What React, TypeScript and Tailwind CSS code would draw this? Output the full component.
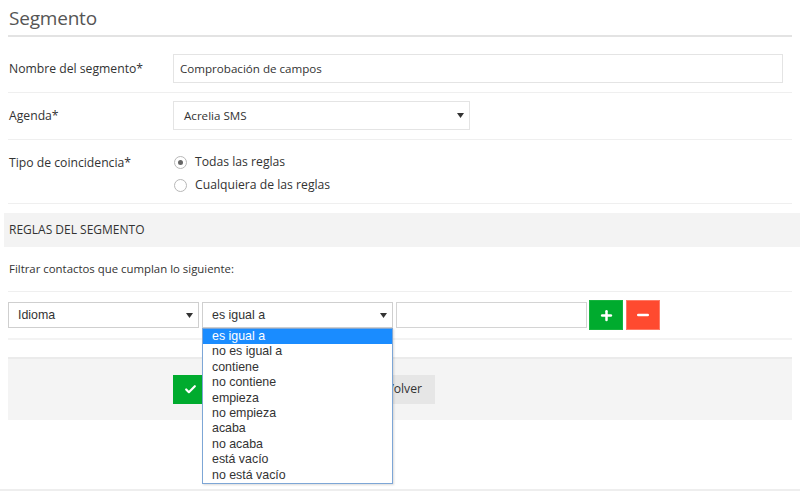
import { Check, Plus, Minus } from "lucide-react";

const ops = [
  "es igual a",
  "no es igual a",
  "contiene",
  "no contiene",
  "empieza",
  "no empieza",
  "acaba",
  "no acaba",
  "está vacío",
  "no está vacío",
];

const Caret = () => (
  <svg width="7" height="5" viewBox="0 0 7 5" className="shrink-0">
    <path d="M0 0h7L3.5 5z" fill="#333" />
  </svg>
);

const Radio = ({ checked }: { checked?: boolean }) => (
  <span className="w-[13px] h-[13px] rounded-full border border-[#b8b8b8] bg-white flex items-center justify-center shrink-0">
    {checked && <span className="w-[5px] h-[5px] rounded-full bg-[#666]" />}
  </span>
);

export default function App() {
  return (
    <div className="w-[800px] h-[491px] bg-white relative overflow-hidden font-['Open_Sans',sans-serif] text-[12.2px] text-[#333]">
      <div className="px-2">
        <h1 className="pl-px pt-[5px] h-[35px] text-[19px] text-[#555] leading-[26px] tracking-[-0.2px]">Segmento</h1>
        <div className="h-[2px] bg-[#e3e3e3]" />

        <div className="flex items-start pt-[17px] pb-[9px] border-b border-[#efefef]">
          <label className="w-[165px] pl-px leading-[29px]">Nombre del segmento*</label>
          <div className="w-[610px] h-[29px] border border-[#e4e4e4] flex items-center px-[6px] text-[11.6px]">
            Comprobación de campos
          </div>
        </div>

        <div className="flex items-start pt-[8px] pb-[9px] border-b border-[#efefef]">
          <label className="w-[165px] pl-px leading-[29px]">Agenda*</label>
          <div className="w-[297px] h-[29px] border border-[#e4e4e4] flex items-center justify-between pl-[10px] pr-[5px] text-[11.6px]">
            <span>Acrelia SMS</span>
            <Caret />
          </div>
        </div>

        <div className="flex items-start pt-[11px] pb-[6px] border-b border-[#efefef]">
          <label className="w-[165px] pl-px leading-[23px]">Tipo de coincidencia*</label>
          <div className="flex flex-col">
            <div className="flex items-center gap-[8px] h-[23px] pl-[1px]">
              <Radio checked />
              <span>Todas las reglas</span>
            </div>
            <div className="flex items-center gap-[8px] h-[23px] pl-[1px]">
              <Radio />
              <span>Cualquiera de las reglas</span>
            </div>
          </div>
        </div>
      </div>

      <div className="mt-[9px] ml-[4px] h-[34px] bg-[#f3f3f3] flex items-center pl-[5px] text-[12px]">
        REGLAS DEL SEGMENTO
      </div>

      <div className="px-2">
        <div className="h-[45px] flex items-center pl-px text-[11.4px] border-b border-[#efefef]">
          Filtrar contactos que cumplan lo siguiente:
        </div>

        <div className="flex items-start pt-[10px] h-[48px] border-b-[2px] border-[#f3f3f3] font-['Liberation_Sans',Arial,sans-serif] text-[12.4px]">
          <div className="w-[191px] h-[26px] border border-[#cfcfcf] flex items-center justify-between pl-[9px] pr-[5px]">
            <span>Idioma</span>
            <Caret />
          </div>
          <div className="ml-[3px] w-[191px] h-[26px] border border-[#cfcfcf] flex items-center justify-between pl-[9px] pr-[5px]">
            <span>es igual a</span>
            <Caret />
          </div>
          <div className="ml-[3px] w-[191px] h-[26px] border border-[#d4d4d4]" />
          <button className="ml-[2px] -mt-[2px] w-[34px] h-[30px] bg-[#00ab2e] border border-[#16b43e] flex items-center justify-center">
            <Plus size={15} strokeWidth={4} color="white" />
          </button>
          <button className="ml-[3px] -mt-[2px] w-[34px] h-[30px] bg-[#ff4a2f] border border-[#ff7a66] flex items-center justify-center">
            <Minus size={16} strokeWidth={4} color="white" />
          </button>
        </div>

        <div className="mt-[17px] h-[63px] bg-[#f4f4f4] border-t-2 border-[#ebebeb] flex items-center pl-[165px] gap-[10px]">
          <button className="h-[29px] w-[160px] bg-[#00ab2e] text-white flex items-center gap-[6px] pl-[11px]">
            <Check size={13} strokeWidth={4} color="white" />
            <span>Guardar</span>
          </button>
          <button className="h-[29px] w-[92px] bg-[#e6e6e6] text-[#333] flex items-center justify-end pr-[13px]">
            Volver
          </button>
        </div>
      </div>

      <div className="absolute left-0 right-0 top-[489px] h-[2px] bg-[#eeeeee]" />

      <ul className="absolute left-[202px] top-[328px] w-[191px] bg-white border border-[#7da6d6] shadow-[1px_1px_2px_rgba(0,0,0,0.15)] font-['Liberation_Sans',Arial,sans-serif] text-[12.4px] text-[#333]">
        {ops.map((o, i) => (
          <li
            key={o}
            className={
              i === 0
                ? "h-[15.4px] leading-[15px] pl-[9px] bg-[#1a8cff] text-white"
                : "h-[15.4px] leading-[15px] pl-[9px]"
            }
          >
            {o}
          </li>
        ))}
      </ul>
    </div>
  );
}
